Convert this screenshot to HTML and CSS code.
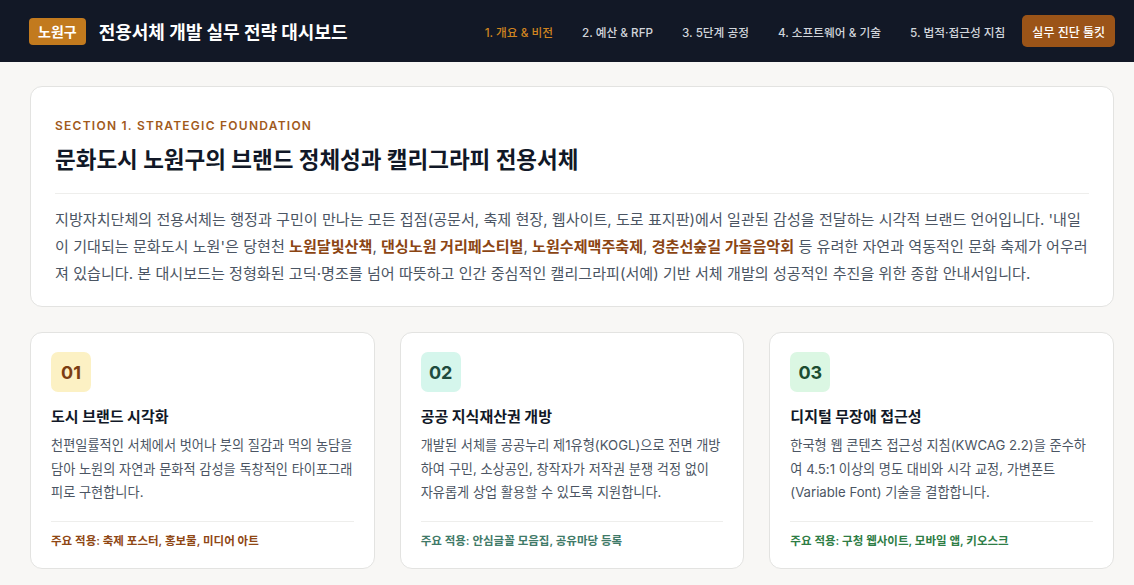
FILE: index.html
```html
<!DOCTYPE html>
<html lang="ko">
<head>
  <meta charset="UTF-8">
  <title>전용서체 개발 실무 전략 대시보드</title>
  <link rel="stylesheet" href="styles.css">
</head>
<body>
  <!-- Barre de navigation -->
  <header class="topbar">
    <div class="brand">
      <span class="brandBadge">노원구</span>
      <span class="brandTitle">전용서체 개발 실무 전략 대시보드</span>
    </div>
    <nav class="navLinks">
      <a class="navItem active">1. 개요 &amp; 비전</a>
      <a class="navItem">2. 예산 &amp; RFP</a>
      <a class="navItem">3. 5단계 공정</a>
      <a class="navItem">4. 소프트웨어 &amp; 기술</a>
      <a class="navItem">5. 법적·접근성 지침</a>
      <button class="toolkitButton">실무 진단 툴킷</button>
    </nav>
  </header>

  <main class="page">
    <!-- Section 1 -->
    <section class="introCard">
      <p class="sectionLabel">SECTION 1. STRATEGIC FOUNDATION</p>
      <h1 class="sectionTitle">문화도시 노원구의 브랜드 정체성과 캘리그라피 전용서체</h1>
      <p class="introText">지방자치단체의 전용서체는 행정과 구민이 만나는 모든 접점(공문서, 축제 현장, 웹사이트, 도로 표지판)에서 일관된 감성을 전달하는 시각적 브랜드 언어입니다. '내일이 기대되는 문화도시 노원'은 당현천 <strong>노원달빛산책</strong>, <strong>댄싱노원 거리페스티벌</strong>, <strong>노원수제맥주축제</strong>, <strong>경춘선숲길 가을음악회</strong> 등 유려한 자연과 역동적인 문화 축제가 어우러져 있습니다. 본 대시보드는 정형화된 고딕·명조를 넘어 따뜻하고 인간 중심적인 캘리그라피(서예) 기반 서체 개발의 성공적인 추진을 위한 종합 안내서입니다.</p>
    </section>

    <!-- Trois piliers -->
    <div class="pillars">
      <article class="pillar amber">
        <span class="pillarNum">01</span>
        <h2 class="pillarTitle">도시 브랜드 시각화</h2>
        <p class="pillarText">천편일률적인 서체에서 벗어나 붓의 질감과 먹의 농담을 담아 노원의 자연과 문화적 감성을 독창적인 타이포그래피로 구현합니다.</p>
        <p class="pillarUse">주요 적용: 축제 포스터, 홍보물, 미디어 아트</p>
      </article>
      <article class="pillar teal">
        <span class="pillarNum">02</span>
        <h2 class="pillarTitle">공공 지식재산권 개방</h2>
        <p class="pillarText">개발된 서체를 공공누리 제1유형(KOGL)으로 전면 개방하여 구민, 소상공인, 창작자가 저작권 분쟁 걱정 없이 자유롭게 상업 활용할 수 있도록 지원합니다.</p>
        <p class="pillarUse">주요 적용: 안심글꼴 모음집, 공유마당 등록</p>
      </article>
      <article class="pillar green">
        <span class="pillarNum">03</span>
        <h2 class="pillarTitle">디지털 무장애 접근성</h2>
        <p class="pillarText">한국형 웹 콘텐츠 접근성 지침(KWCAG 2.2)을 준수하여 4.5:1 이상의 명도 대비와 시각 교정, 가변폰트(Variable Font) 기술을 결합합니다.</p>
        <p class="pillarUse">주요 적용: 구청 웹사이트, 모바일 앱, 키오스크</p>
      </article>
    </div>
  </main>
</body>
</html>
```

FILE: styles.css
```css
* {
  box-sizing: border-box;
}

body {
  margin: 0;
  background-color: #f8f7f5;
  font-family: "Inter", "Noto Sans CJK KR", sans-serif;
  color: #1f2937;
}

/* Barre du haut */
.topbar {
  height: 62px;
  background-color: #121826;
  display: flex;
  align-items: center;
  justify-content: space-between;
  padding: 0 19px 0 29px;
}

.brand {
  display: flex;
  align-items: center;
  gap: 13px;
}

.brandBadge {
  background-color: #c27a1e;
  color: #fff;
  font-size: 14px;
  font-weight: 700;
  padding: 4px 9px;
  border-radius: 4px;
  line-height: 19px;
}

.brandTitle {
  color: #fff;
  font-size: 18px;
  font-weight: 700;
}

.navLinks {
  display: flex;
  align-items: center;
  gap: 29px;
}

.navItem {
  color: #d1d5db;
  font-size: 11.7px;
  font-weight: 500;
  cursor: pointer;
}

.navItem.active {
  color: #d08420;
}

.toolkitButton {
  margin-left: -12px;
  background-color: #9b5418;
  color: #fff;
  border: none;
  border-radius: 5px;
  padding: 0 10px;
  height: 32px;
  font-family: inherit;
  font-size: 12px;
  font-weight: 500;
  cursor: pointer;
}

/* Contenu */
.page {
  padding: 24px 20px 17px 30px;
}

.introCard {
  background-color: #fff;
  border: 1px solid #e3e3e1;
  border-radius: 12px;
  padding: 30px 24px 19px;
}

.sectionLabel {
  margin: 0;
  color: #a15a1c;
  font-size: 12px;
  font-weight: 600;
  letter-spacing: 1.25px;
  line-height: 18px;
}

.sectionTitle {
  margin: 9px 0 0;
  font-size: 22.5px;
  font-weight: 700;
  color: #111827;
  line-height: 32px;
  padding-bottom: 17px;
  border-bottom: 1px solid #eeeeec;
}

.introText {
  margin: 12px 0 0;
  font-size: 15.1px;
  line-height: 27px;
  color: #4b5563;
}

.introText strong {
  color: #8b4513;
  font-weight: 700;
}

.pillars {
  margin-top: 25px;
  display: grid;
  grid-template-columns: repeat(3, 1fr);
  gap: 25px;
}

.pillar {
  background-color: #fff;
  border: 1px solid #e3e3e1;
  border-radius: 12px;
  padding: 19px 20px 18px;
  display: flex;
  flex-direction: column;
}

.pillarNum {
  width: 40px;
  height: 40px;
  border-radius: 7px;
  display: flex;
  align-items: center;
  justify-content: center;
  font-size: 18px;
  font-weight: 700;
}

.pillarTitle {
  margin: 14px 0 0;
  font-size: 15px;
  font-weight: 700;
  color: #111827;
  line-height: 22px;
}

.pillarText {
  margin: 6px 0 0;
  font-size: 13.2px;
  line-height: 23.5px;
  color: #4b5563;
  flex: 1;
}

.pillarUse {
  margin: 16px 0 0;
  padding-top: 10px;
  border-top: 1px solid #eeeeec;
  font-size: 11.5px;
  font-weight: 600;
  line-height: 18px;
}

.amber .pillarNum { background-color: #fcf1c4; color: #7c3d12; }
.amber .pillarUse { color: #8f4714; }
.teal .pillarNum { background-color: #d5f6ec; color: #1e4b3e; }
.teal .pillarUse { color: #3f7a68; }
.green .pillarNum { background-color: #dbf7e3; color: #1c4d30; }
.green .pillarUse { color: #2e7d45; }
```
